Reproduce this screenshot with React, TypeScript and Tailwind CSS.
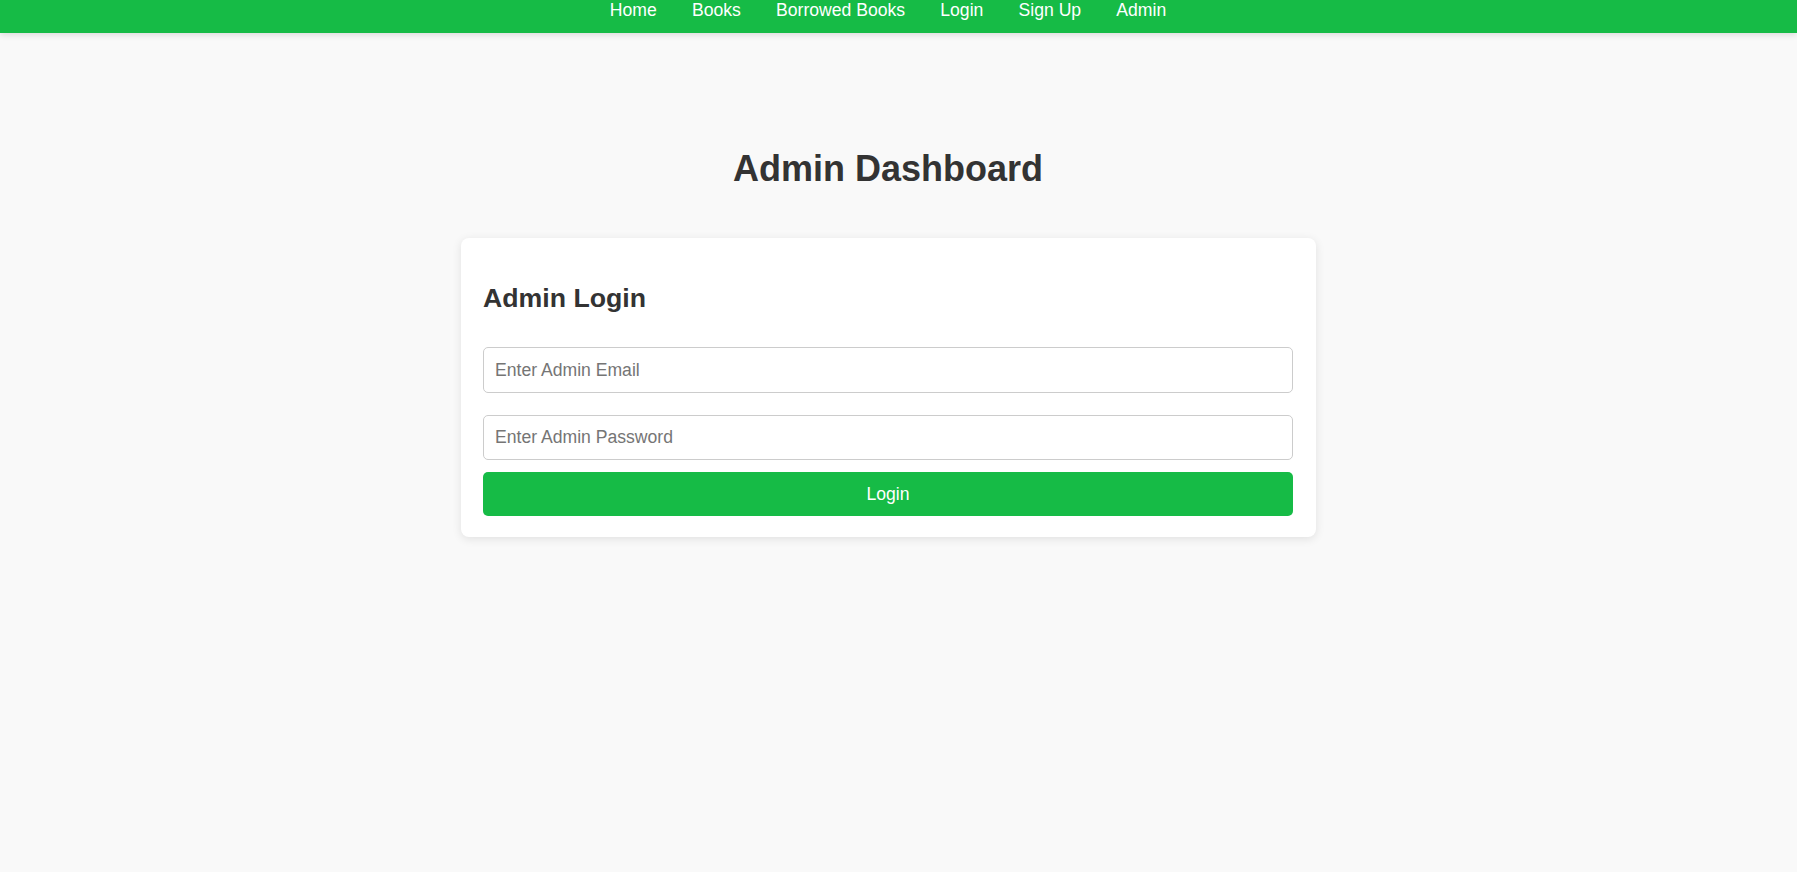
import React from "react";

export default function App() {
  const links = ["Home", "Books", "Borrowed Books", "Login", "Sign Up", "Admin"];
  return (
    <div className="min-h-screen bg-[#f9f9f9] text-[#333] font-['Liberation_Sans',Arial,sans-serif]">
      <nav className="h-[33px] bg-[#16bb46] shadow-[0_2px_6px_rgba(0,0,0,0.12)]">
        <ul className="flex justify-center gap-[35.2px] pr-[21px] text-[17.6px] leading-[normal] text-white">
          {links.map((l) => (
            <li key={l}>
              <a href="#" className="text-white">
                {l}
              </a>
            </li>
          ))}
        </ul>
      </nav>
      <main className="flex flex-col items-center pr-[21px] pt-[115px]">
        <h1 className="text-[36px] font-bold leading-[normal] text-[#333]">Admin Dashboard</h1>
        <div className="mt-[48px] w-[855px] rounded-[8px] bg-white px-[22.5px] pt-[22.5px] pb-[21px] shadow-[0_2px_10px_rgba(0,0,0,0.1)]">
          <h2 className="mt-[22px] text-[26.7px] font-bold leading-[normal] text-[#333]">Admin Login</h2>
          <input
            type="email"
            placeholder="Enter Admin Email"
            className="mt-[33.5px] block h-[46px] w-full rounded-[5px] border border-[#ccc] bg-white px-[11px] text-[17.6px] outline-none placeholder:text-[#757575]"
          />
          <input
            type="password"
            placeholder="Enter Admin Password"
            className="mt-[22px] block h-[45px] w-full rounded-[5px] border border-[#ccc] bg-white px-[11px] text-[17.6px] outline-none placeholder:text-[#757575]"
          />
          <button className="mt-[12px] block h-[44px] w-full rounded-[5px] bg-[#16bb46] text-[17.6px] text-white">
            Login
          </button>
        </div>
      </main>
    </div>
  );
}
